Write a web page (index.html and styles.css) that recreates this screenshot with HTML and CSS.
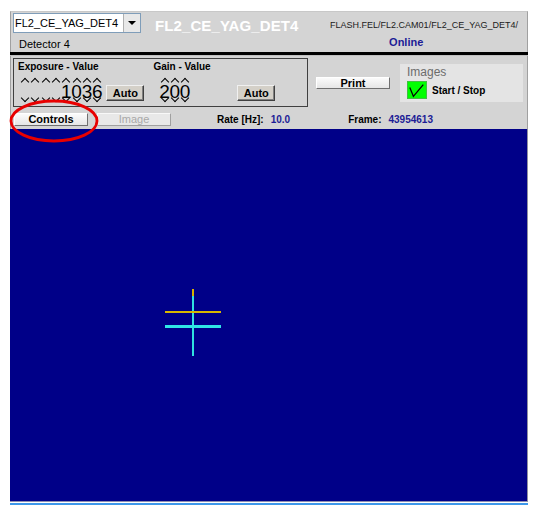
FILE: index.html
```html
<!DOCTYPE html>
<html>
<head>
<meta charset="utf-8">
<link rel="stylesheet" href="styles.css">
</head>
<body>
<div class="frame">
  <div class="header">
    <div class="hdr-left">
      <div class="select">
        <span class="select-text">FL2_CE_YAG_DET4</span>
        <span class="select-btn"><span class="tri"></span></span>
      </div>
      <div class="detector">Detector 4</div>
    </div>
    <div class="title">FL2_CE_YAG_DET4</div>
    <div class="hdr-right">
      <div class="path">FLASH.FEL/FL2.CAM01/FL2_CE_YAG_DET4/</div>
      <div class="online">Online</div>
    </div>
  </div>
  <div class="sep"></div>
  <div class="controls">
    <div class="value-box">
      <div class="group">
        <div class="label">Exposure - Value</div>
        <div class="spin-row">
          <div class="spinner exp">
            <div class="col"><span class="up"></span><span class="digit"></span><span class="down"></span></div>
            <div class="col"><span class="up"></span><span class="digit"></span><span class="down"></span></div>
            <div class="col"><span class="up"></span><span class="digit"></span><span class="down"></span></div>
            <div class="col"><span class="up"></span><span class="digit"></span><span class="down"></span></div>
            <div class="col"><span class="up"></span><span class="digit">1</span><span class="down"></span></div>
            <div class="col"><span class="up"></span><span class="digit">0</span><span class="down"></span></div>
            <div class="col"><span class="up"></span><span class="digit">3</span><span class="down"></span></div>
            <div class="col"><span class="up"></span><span class="digit">6</span><span class="down"></span></div>
          </div>
          <button class="auto exp-auto">Auto</button>
        </div>
      </div>
      <div class="group gain">
        <div class="label">Gain - Value</div>
        <div class="spin-row">
          <div class="spinner gain-spin">
            <div class="col"><span class="up"></span><span class="digit">2</span><span class="down"></span></div>
            <div class="col"><span class="up"></span><span class="digit">0</span><span class="down"></span></div>
            <div class="col"><span class="up"></span><span class="digit">0</span><span class="down"></span></div>
          </div>
          <button class="auto gain-auto">Auto</button>
        </div>
      </div>
    </div>
    <button class="flat print">Print</button>
    <div class="images">
      <div class="images-title">Images</div>
      <div class="images-row">
        <span class="check">
          <svg width="20" height="18" viewBox="0 0 20 18"><polyline points="2,5 6,15 17,2" fill="none" stroke="#000" stroke-width="1.4"/></svg>
        </span>
        <span class="startstop">Start / Stop</span>
      </div>
    </div>
  </div>
  <div class="row">
    <button class="flat controls-btn">Controls</button>
    <button class="flat image-btn" disabled>Image</button>
    <span class="lbl rate">Rate [Hz]:</span><span class="val">10.0</span>
    <span class="lbl frame-lbl">Frame:</span><span class="val">43954613</span>
  </div>
  <div class="image">
    <div class="cross-v"></div>
    <div class="cross-v-top"></div>
    <div class="cross-h-yellow"></div>
    <div class="cross-h-cyan"></div>
  </div>
  <div class="bottom-line"></div>
  <svg class="ellipse" width="94" height="48" viewBox="0 0 94 48"><ellipse cx="46" cy="22" rx="43" ry="20" fill="none" stroke="#e80000" stroke-width="2.8"/></svg>
</div>
</body>
</html>
```

FILE: styles.css
```css
* { box-sizing: border-box; }
body {
  margin: 0;
  background: #ffffff;
  font-family: "Liberation Sans", Arial, sans-serif;
  color: #000;
}
.frame {
  position: relative;
  margin: 11px 0 0 10px;
  width: 518px;
}
.header {
  display: flex;
  height: 41px;
  background: #d4d4d4;
  border-left: 1px solid #a0a0a0;
  border-right: 1px solid #a0a0a0;
  border-top: 1px solid #c8c8c8;
}
.hdr-left {
  display: flex;
  flex-direction: column;
  padding: 1px 0 0 2px;
  width: 140px;
}
.select {
  display: flex;
  width: 128px;
  height: 20px;
  border: 1px solid #7f9db9;
  background: #fff;
}
.select-text {
  flex: 1;
  font-size: 11px;
  line-height: 18px;
  padding-left: 1px;
}
.select-btn {
  width: 17px;
  border-left: 1px solid #b0b0b0;
  background: #e8e8e8;
  display: flex;
  align-items: center;
  justify-content: center;
}
.tri {
  width: 0; height: 0;
  border-left: 4px solid transparent;
  border-right: 4px solid transparent;
  border-top: 4px solid #000;
}
.detector {
  font-size: 11px;
  margin: 5px 0 0 6px;
}
.title {
  margin: 5px 0 0 4px;
  font-size: 15px;
  font-weight: bold;
  color: #fff;
  letter-spacing: 0.1px;
}
.hdr-right {
  margin-left: auto;
  padding: 8px 9px 0 0;
  display: flex;
  flex-direction: column;
}
.path {
  font-size: 9px;
  color: #202020;
}
.online {
  margin: 6px 0 0 59px;
  font-size: 11px;
  font-weight: bold;
  color: #1c1c96;
}
.sep {
  height: 4px;
  border-top: 3px solid #000;
  border-bottom: 1px solid #c0c0c0;
  background: #808080;
}
.controls {
  display: flex;
  height: 53px;
  background: #d4d4d4;
  border-left: 1px solid #a0a0a0;
  border-right: 1px solid #a0a0a0;
}
.value-box {
  margin: 2px 0 0 2px;
  width: 295px;
  height: 49px;
  border: 1px solid #404040;
  display: flex;
  padding: 2px 0 0 4px;
}
.group { display: flex; flex-direction: column; }
.label {
  font-size: 10px;
  font-weight: bold;
  line-height: 11px;
}
.spin-row { display: flex; align-items: flex-start; }
.spinner { display: flex; margin-top: 4px; }
.exp { margin-left: 2px; }
.col {
  width: 10.3px;
  display: flex;
  flex-direction: column;
  align-items: center;
}
.up {
  width: 6px; height: 6px;
  border-top: 1.5px solid #000;
  border-left: 1.5px solid #000;
  transform: rotate(45deg);
  margin-top: 3px;
}
.down {
  width: 6px; height: 6px;
  border-bottom: 1.5px solid #000;
  border-right: 1.5px solid #000;
  transform: rotate(45deg);
  margin-top: -4px;
}
.digit {
  font-size: 19px;
  line-height: 15px;
  height: 15px;
  margin-top: -1px;
}
.auto {
  font-family: "Liberation Sans", Arial, sans-serif;
  font-size: 11px;
  font-weight: bold;
  padding: 0;
  height: 16px;
  background: #d4d0c8;
  border: 1px solid;
  border-color: #f0f0f0 #404040 #404040 #f0f0f0;
  box-shadow: inset -1px -1px 0 #808080;
  margin-top: 13px;
}
.exp-auto { width: 38px; margin-left: 4px; }
.gain { margin-left: 9px; }
.gain-spin { margin-left: 6px; }
.gain-auto { width: 38px; margin-left: 47px; }
.flat {
  font-family: "Liberation Sans", Arial, sans-serif;
  font-size: 11px;
  font-weight: bold;
  padding: 0;
  background: linear-gradient(#fbfbfb, #e6e6e6);
  border: 1px solid;
  border-color: #ffffff #707070 #707070 #ffffff;
  line-height: 11px;
}
.print {
  width: 74px;
  height: 12px;
  margin: 21px 0 0 8px;
}
.images {
  margin: 8px 0 0 10px;
  width: 123px;
  height: 38px;
  background: #e4e4e4;
  padding: 1px 0 0 7px;
}
.images-title {
  font-size: 12px;
  color: #6c6c6c;
  line-height: 14px;
}
.images-row { display: flex; align-items: center; margin-top: 2px; }
.check {
  width: 20px; height: 18px;
  background: #00ff00;
  border: 1px solid #40c040;
  display: flex;
}
.startstop {
  font-size: 10px;
  font-weight: bold;
  margin-left: 5px;
}
.row {
  display: flex;
  align-items: center;
  height: 20px;
  background: #d4d4d4;
  border-left: 1px solid #a0a0a0;
  border-right: 1px solid #a0a0a0;
}
.controls-btn { width: 74px; height: 13px; margin-left: 3px; }
.image-btn {
  width: 74px; height: 13px; margin-left: 9px;
  color: #a8a8a8;
  font-weight: normal;
  background: #e8e8e8;
  border-color: #f8f8f8 #a0a0a0 #a0a0a0 #f8f8f8;
}
.lbl { font-size: 10px; font-weight: bold; }
.val { font-size: 10px; font-weight: bold; color: #1c1c96; margin-left: 7px; }
.rate { margin-left: 46px; }
.frame-lbl { margin-left: 58px; }
.image {
  position: relative;
  height: 373px;
  background: #000088;
  border-right: 1px solid #9090a0;
  border-bottom: 1px solid #9090b0;
}
.cross-v {
  position: absolute;
  left: 182px; top: 167px;
  width: 2px; height: 60px;
  background: #30e0e0;
}
.cross-v-top {
  position: absolute;
  left: 182px; top: 160px;
  width: 2px; height: 7px;
  background: #d8b000;
}
.cross-h-yellow {
  position: absolute;
  left: 155px; top: 182px;
  width: 56px; height: 2px;
  background: #d8b800;
}
.cross-h-cyan {
  position: absolute;
  left: 155px; top: 196px;
  width: 56px; height: 3px;
  background: #30e6e6;
}
.bottom-line {
  height: 2px;
  margin-top: 1px;
  background: #3d97ea;
}
.ellipse {
  position: absolute;
  left: -2px;
  top: 88px;
}
```
